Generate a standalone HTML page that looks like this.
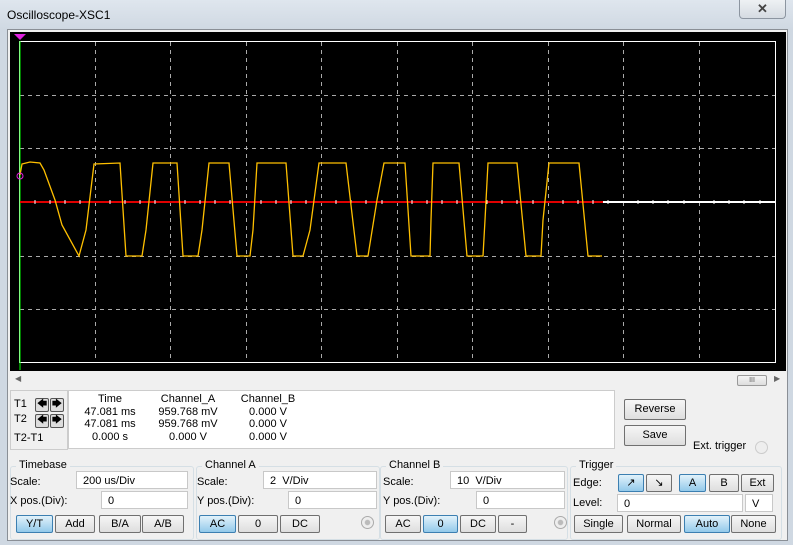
<!DOCTYPE html><html><head><style>
body{margin:0;width:793px;height:545px;overflow:hidden;background:#c9d3de;font-family:"Liberation Sans",sans-serif;font-size:11px;color:#000;position:relative}
.a{position:absolute}
.win{left:0;top:0;width:793px;height:545px;background:linear-gradient(#dfe6ee,#cfd8e2 30px,#cfd8e2)}
.in{left:7px;top:29px;width:779px;height:510px;background:#f0f0f0;border:1px solid #8a8f96}
.btn{position:absolute;height:16px;border:1px solid #707070;border-radius:2px;background:linear-gradient(#f6f6f6,#dedede);text-align:center;line-height:16px;font-size:11px}
.on{background:linear-gradient(#e2f2fb,#93c9ea);border-color:#3c7fb1}
.inp{position:absolute;background:#fff;border:1px solid #c8c8c8;height:18px;line-height:18px;padding-left:6px;box-sizing:border-box}
.grp{position:absolute;border:1px solid #d5dfe5;border-radius:3px;top:466px;height:72px}
.gl{position:absolute;background:#f0f0f0;padding:0 3px;top:-8px;left:5px}
.radio{position:absolute;width:11px;height:11px;border-radius:50%;border:1px solid #aaa;background:radial-gradient(#bbb 30%,#eee 40%)}
</style></head><body>
<div class="a win"></div>
<div class="a" style="left:7px;top:8px;font-size:12px">Oscilloscope-XSC1</div>
<div class="a" style="left:739px;top:0;width:45px;height:18px;border:1px solid #8c95a0;border-top:none;border-radius:0 0 4px 4px;background:linear-gradient(#eef1f4,#d5dbe2);text-align:center;font-size:13px;font-weight:bold;color:#444;line-height:18px">✕</div>
<div class="a in"></div>
<svg class="a" style="left:10px;top:32px" width="776" height="339" viewBox="10 32 776 339">
<rect x="10" y="32" width="776" height="339" fill="#000"/>
<rect x="19.5" y="41.5" width="756" height="321" fill="none" stroke="#fff"/>
<g stroke="#aaa" stroke-dasharray="4,4">
<path d="M95.5 42V362M170.5 42V362M246.5 42V362M321.5 42V362M397.5 42V362M472.5 42V362M548.5 42V362M623.5 42V362M699.5 42V362"/>
<path d="M20 95.5H775M20 148.5H775M20 256.5H775M20 309.5H775"/>
</g>
<line x1="20" y1="41" x2="20" y2="370" stroke="#0f0"/>
<polygon points="14,34 26,34 20,40" fill="#e020e0"/>
<line x1="20" y1="202" x2="603" y2="202" stroke="#e00000" stroke-width="2"/>
<line x1="603" y1="202" x2="775" y2="202" stroke="#fff" stroke-width="2"/>
<g stroke="#fff"><path d="M35 200v4M50 200v4M65 200v4M80 200v4M110 200v4M125 200v4M140 200v4M155 200v4M185 200v4M200 200v4M215 200v4M230 200v4M261 200v4M276 200v4M291 200v4M306 200v4M336 200v4M351 200v4M366 200v4M382 200v4M412 200v4M427 200v4M442 200v4M457 200v4M487 200v4M502 200v4M517 200v4M533 200v4M563 200v4M578 200v4M593 200v4M608 200v4M638 200v4M653 200v4M668 200v4M684 200v4M714 200v4M729 200v4M744 200v4M760 200v4"/></g>
<polyline fill="none" stroke="#ffc000" stroke-width="1.3" points="20,175 22,164 30,162 40,163 44,170 55,200 62,225 79,256 86,230 94,164 120,163 126,256 142,256 146,230 153,163 177,163 183,256 198,256 202,230 209,163 229,163 237,256 250,256 253,230 257,163 286,163 293,256 303,256 310,230 319,163 346,163 357,256 368,256 377,200 384,163 405,163 411,256 430,256 431,220 433,163 459,163 467,256 483,256 485,220 488,163 517,163 526,256 541,256 543,220 549,163 579,163 588,256 602,256"/>
<circle cx="20" cy="176" r="3" fill="none" stroke="#e020e0"/>
</svg>
<div class="a" style="left:10px;top:374px;width:776px;height:12px;background:#f0f0f0"></div>
<div class="a" style="left:15px;top:374px;font-size:8px;color:#666">◀</div>
<div class="a" style="left:737px;top:375px;width:28px;height:9px;border:1px solid #999;border-radius:2px;background:linear-gradient(#f4f4f4,#ddd);font-size:7px;text-align:center;line-height:9px;color:#555">III</div>
<div class="a" style="left:774px;top:374px;font-size:8px;color:#666">▶</div>
<div class="a" style="left:10px;top:390px;width:56px;height:58px;border:1px solid #ccc"></div>
<div class="a" style="left:14px;top:398px">T1</div>
<div class="a" style="left:14px;top:413px">T2</div>
<div class="a" style="left:14px;top:432px">T2-T1</div>
<div class="a" style="left:35px;top:398px;width:12px;height:12px;border:1px solid #555;border-radius:2px;background:#ddd;font-size:10px;line-height:12px;text-align:center">🡄</div>
<div class="a" style="left:50px;top:398px;width:12px;height:12px;border:1px solid #555;border-radius:2px;background:#ddd;font-size:10px;line-height:12px;text-align:center">🡆</div>
<div class="a" style="left:35px;top:414px;width:12px;height:12px;border:1px solid #555;border-radius:2px;background:#ddd;font-size:10px;line-height:12px;text-align:center">🡄</div>
<div class="a" style="left:50px;top:414px;width:12px;height:12px;border:1px solid #555;border-radius:2px;background:#ddd;font-size:10px;line-height:12px;text-align:center">🡆</div>
<div class="a" style="left:68px;top:390px;width:545px;height:57px;background:#fff;border:1px solid #ccc"></div>
<div class="a" style="left:70px;top:393px;width:80px;text-align:center;line-height:12.5px">Time<br>47.081 ms<br>47.081 ms<br>0.000 s</div>
<div class="a" style="left:143px;top:393px;width:90px;text-align:center;line-height:12.5px">Channel_A<br>959.768 mV<br>959.768 mV<br>0.000 V</div>
<div class="a" style="left:223px;top:393px;width:90px;text-align:center;line-height:12.5px">Channel_B<br>0.000 V<br>0.000 V<br>0.000 V</div>
<div class="btn" style="left:624px;top:399px;width:60px;height:19px;line-height:19px">Reverse</div>
<div class="btn" style="left:624px;top:425px;width:60px;height:19px;line-height:19px">Save</div>
<div class="a" style="left:693px;top:440px">Ext. trigger</div>
<div class="radio" style="left:755px;top:441px;background:#eee;border-color:#ccc"></div>

<div class="grp" style="left:10px;width:182px"><div class="gl">Timebase</div></div>
<div class="a" style="left:10px;top:476px">Scale:</div>
<div class="inp" style="left:76px;top:471px;width:112px">200 us/Div</div>
<div class="a" style="left:10px;top:495px">X pos.(Div):</div>
<div class="inp" style="left:101px;top:491px;width:87px">0</div>
<div class="btn on" style="left:16px;top:515px;width:35px">Y/T</div>
<div class="btn" style="left:55px;top:515px;width:38px">Add</div>
<div class="btn" style="left:99px;top:515px;width:40px">B/A</div>
<div class="btn" style="left:142px;top:515px;width:40px">A/B</div>

<div class="grp" style="left:196px;width:182px"><div class="gl">Channel A</div></div>
<div class="a" style="left:197px;top:476px">Scale:</div>
<div class="inp" style="left:263px;top:471px;width:114px">2&nbsp; V/Div</div>
<div class="a" style="left:197px;top:495px">Y pos.(Div):</div>
<div class="inp" style="left:288px;top:491px;width:89px">0</div>
<div class="btn on" style="left:199px;top:515px;width:35px">AC</div>
<div class="btn" style="left:238px;top:515px;width:38px">0</div>
<div class="btn" style="left:280px;top:515px;width:38px">DC</div>
<div class="radio" style="left:361px;top:516px"></div>

<div class="grp" style="left:380px;width:186px"><div class="gl">Channel B</div></div>
<div class="a" style="left:383px;top:476px">Scale:</div>
<div class="inp" style="left:450px;top:471px;width:115px">10&nbsp; V/Div</div>
<div class="a" style="left:383px;top:495px">Y pos.(Div):</div>
<div class="inp" style="left:476px;top:491px;width:89px">0</div>
<div class="btn" style="left:385px;top:515px;width:34px">AC</div>
<div class="btn on" style="left:423px;top:515px;width:33px">0</div>
<div class="btn" style="left:460px;top:515px;width:34px">DC</div>
<div class="btn" style="left:498px;top:515px;width:27px">-</div>
<div class="radio" style="left:554px;top:516px"></div>

<div class="grp" style="left:570px;width:210px"><div class="gl">Trigger</div></div>
<div class="a" style="left:573px;top:477px">Edge:</div>
<div class="btn on" style="left:618px;top:474px;width:24px">↗</div>
<div class="btn" style="left:646px;top:474px;width:24px">↘</div>
<div class="btn on" style="left:679px;top:474px;width:25px">A</div>
<div class="btn" style="left:709px;top:474px;width:28px">B</div>
<div class="btn" style="left:741px;top:474px;width:31px">Ext</div>
<div class="a" style="left:573px;top:497px">Level:</div>
<div class="inp" style="left:617px;top:494px;width:126px">0</div>
<div class="inp" style="left:745px;top:494px;width:28px">V</div>
<div class="btn" style="left:574px;top:515px;width:47px">Single</div>
<div class="btn" style="left:627px;top:515px;width:52px">Normal</div>
<div class="btn on" style="left:684px;top:515px;width:44px">Auto</div>
<div class="btn" style="left:731px;top:515px;width:43px">None</div>
</body></html>
